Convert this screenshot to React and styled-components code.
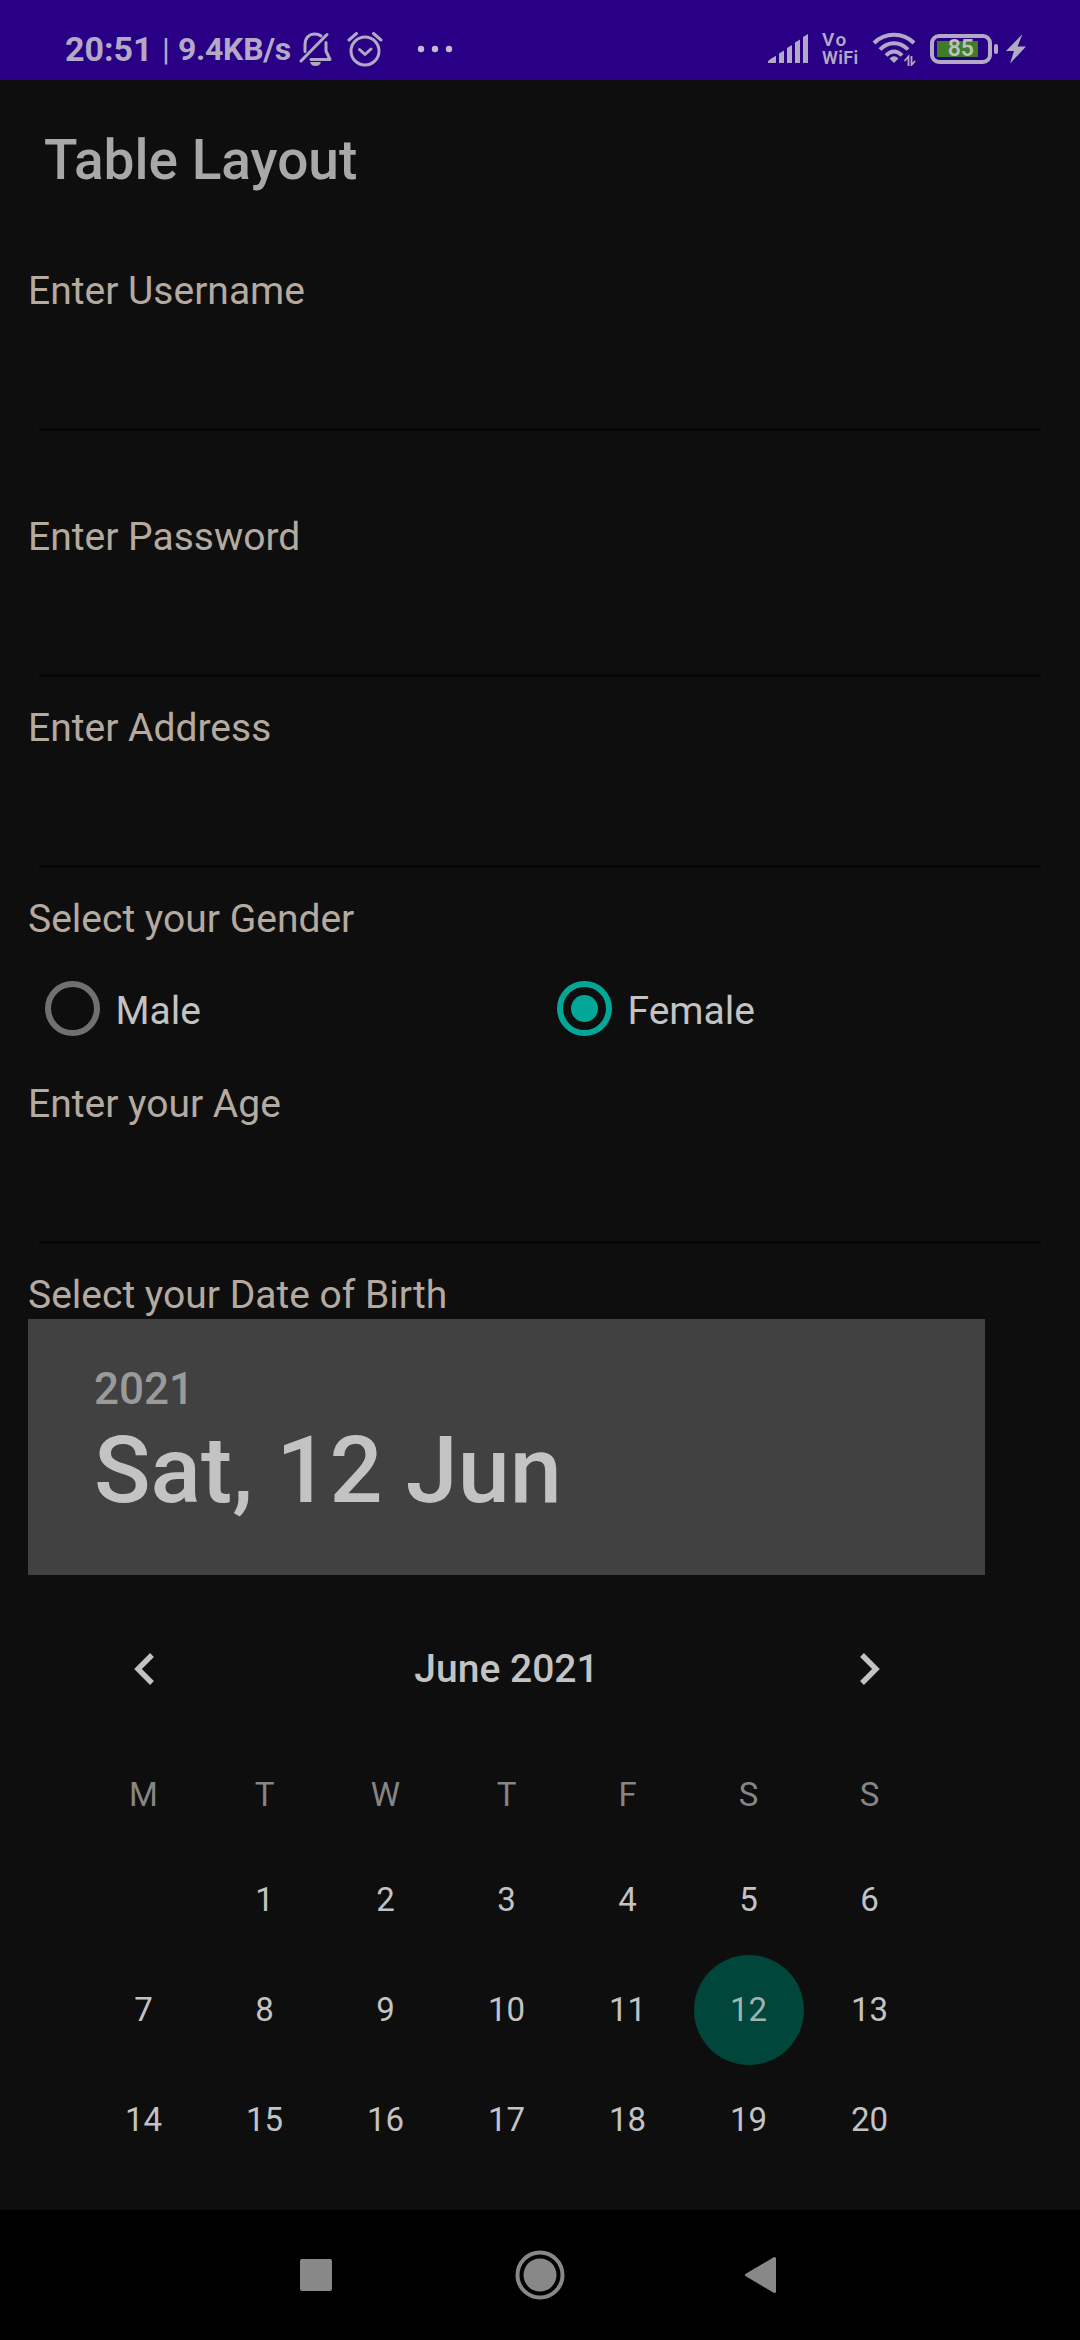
import React, { useState } from "react";
import styled, { createGlobalStyle } from "styled-components";

const GlobalStyle = createGlobalStyle`
  * { box-sizing: border-box; }
  body { margin: 0; background: #0e0e0e; }
  button { font: inherit; border: 0; padding: 0; background: none; color: inherit; }
`;

const Screen = styled.div`
  width: 1080px;
  height: 2340px;
  display: flex;
  flex-direction: column;
  overflow: hidden;
  background: #0e0e0e;
  color: #c3c3c3;
  font-family: Roboto, sans-serif;
`;

const StatusBar = styled.header`
  height: 80px;
  flex: none;
  display: flex;
  align-items: flex-start;
  justify-content: space-between;
  padding: 27px 54px 0 65px;
  background: #290085;
  color: #b2a9c4;
`;

const StatusGroup = styled.div`
  display: flex;
  align-items: center;
  height: 44px;
`;

const StatusText = styled.span`
  width: ${(p) => p.$width}px;
  font-size: ${(p) => p.$size}px;
  font-weight: ${(p) => p.$weight || 700};
  letter-spacing: ${(p) => p.$tracking || 0}px;
  line-height: 46px;
  white-space: nowrap;
`;

const StatusIcon = styled.svg`
  flex: none;
  display: block;
  margin-left: ${(p) => p.$gap || 0}px;
`;

const VoWifi = styled.div`
  width: 38px;
  margin-left: 13px;
  display: flex;
  flex-direction: column;
  font-size: 18px;
  line-height: 18px;
  font-weight: 600;
  letter-spacing: 0.4px;
`;

const Vo = styled.span`
  font-size: 19px;
  letter-spacing: 1.5px;
`;

const Battery = styled.div`
  width: 62px;
  height: 30px;
  margin-left: 14px;
  padding: 3px;
  display: flex;
  border: 4px solid currentColor;
  border-radius: 9px;
`;

const BatteryLevel = styled.div`
  width: 41px;
  height: 16px;
  display: flex;
  align-items: center;
  justify-content: flex-end;
  padding-right: 4px;
  background: #3c7d26;
  color: #bdbfc0;
  font-size: 23px;
  font-weight: 600;
  line-height: 16px;
`;

const BatteryTip = styled.span`
  width: 4px;
  height: 10px;
  margin-left: 2px;
  border-radius: 2px;
  background: currentColor;
`;

const AppBar = styled.div`
  height: 154px;
  flex: none;
  display: flex;
  align-items: center;
  padding: 6px 44px 0;
`;

const Title = styled.h1`
  margin: 0;
  color: #a8a8a8;
  font-size: 55px;
  line-height: 64px;
  font-weight: 500;
`;

const Form = styled.main`
  flex: 1;
  min-height: 0;
  overflow: hidden;
  padding: 31px 28px 0;
`;

const Field = styled.div`
  height: 191px;
  margin-bottom: ${(p) => p.$after || 0}px;
`;

const Label = styled.label`
  display: block;
  height: ${(p) => p.$height || 51}px;
  color: #b5aaa0;
  font-size: 39px;
  line-height: 52px;
  white-space: nowrap;
`;

const Input = styled.input`
  display: block;
  width: 1002px;
  height: 115px;
  margin: 0 11px;
  padding: 0;
  border: 0;
  border-bottom: 3px solid #070707;
  background: transparent;
  color: #c3c3c3;
  font: 49px Roboto, sans-serif;
  outline: none;
`;

const RadioGroup = styled.div`
  height: 134px;
  display: grid;
  grid-template-columns: 1fr 1fr;
  align-items: center;
  padding-bottom: 5px;
`;

const Radio = styled.button`
  display: flex;
  align-items: center;
  gap: 16px;
  padding-left: 16.5px;
  font-size: 39px;
  line-height: 52px;
`;

const RadioRing = styled.span`
  width: 55px;
  height: 55px;
  display: grid;
  place-items: center;
  border: 6px solid ${(p) => (p.$on ? "#03a798" : "#707070")};
  border-radius: 50%;
`;

const RadioDot = styled.span`
  width: 27px;
  height: 27px;
  border-radius: 50%;
  background: #03a798;
`;

const RadioText = styled.span`
  padding-top: 5px;
`;

const DatePicker = styled.section`
  width: 957px;
`;

const DateHeader = styled.div`
  height: 256px;
  padding: 44px 66px 0;
  background: #414141;
`;

const Year = styled.div`
  color: #9a9a9a;
  font-size: 44px;
  line-height: 52px;
  font-weight: 500;
`;

const DateText = styled.div`
  font-size: 93.5px;
  line-height: 110px;
  font-weight: 500;
`;

const MonthBar = styled.div`
  height: 154px;
  margin-top: 17px;
  padding: 0 55px;
  display: grid;
  grid-template-columns: 121px 1fr 121px;
  align-items: center;
  justify-items: center;
`;

const MonthName = styled.div`
  font-size: 39px;
  font-weight: 500;
  line-height: 46px;
`;

const ArrowButton = styled.button`
  display: flex;
`;

const WeekRow = styled.div`
  height: ${(p) => p.$height}px;
  padding: 0 55px;
  display: grid;
  grid-template-columns: repeat(7, 121px);
  align-items: center;
  justify-items: center;
`;

const WeekDay = styled.span`
  padding-bottom: 2px;
  color: #858585;
  font-size: 33px;
  line-height: 39px;
`;

const Day = styled.button`
  width: 110px;
  height: 110px;
  border-radius: 50%;
  background: ${(p) => (p.$selected ? "#00463a" : "transparent")};
  color: ${(p) => (p.$selected ? "#9fb4af" : "#c3c3c3")};
  font-size: 33px;
  line-height: 110px;
  text-align: center;
`;

const NavBar = styled.nav`
  height: 130px;
  flex: none;
  display: grid;
  grid-template-columns: repeat(3, 224px);
  justify-content: center;
  align-items: center;
  justify-items: center;
  background: #000;
`;

const NavButton = styled.button`
  display: flex;
`;

const BellOff = () => (
  <StatusIcon width="34" height="36" viewBox="0 0 34 36" fill="none" stroke="currentColor" strokeWidth="3" strokeLinecap="round" strokeLinejoin="round" $gap={7}>
    <path d="M6 20.500V14C6 7 10 3 16 3C18.500 3 20.500 3.700 22 5" />
    <path d="M27 11.500V20L31 28.500H12" />
    <path d="M2 30L28 3.500" />
    <path d="M11 31H22C21 34 19 35 16.500 35S12 34 11 31Z" fill="currentColor" stroke="none" />
  </StatusIcon>
);

const Alarm = () => (
  <StatusIcon width="36" height="36" viewBox="0 0 36 36" fill="none" stroke="currentColor" strokeWidth="3" strokeLinecap="round" strokeLinejoin="round" $gap={14}>
    <circle cx="18" cy="20" r="14" />
    <path d="M12.500 18.500L18 23.500L24 18" />
    <path d="M2 9L9.500 2.500M34 9L26.500 2.500" />
  </StatusIcon>
);

const Dots = () => (
  <StatusIcon width="36" height="8" viewBox="0 0 36 8" fill="#c3bcd0" $gap={34}>
    <circle cx="4" cy="4" r="3.200" />
    <circle cx="18" cy="4" r="3.200" />
    <circle cx="32" cy="4" r="3.200" />
  </StatusIcon>
);

const Signal = () => (
  <StatusIcon width="41" height="30" viewBox="0 0 41 30" fill="currentColor">
    <path d="M0 29V27.500C0 26.500 6 22.500 8 22V29Z" />
    <path d="M11 29V19.500L16 16.500V29Z" />
    <path d="M19 29V14L24 11V29Z" />
    <path d="M27 29V8.500L32 5.500V29Z" />
    <path d="M35 29V3L40 0V29Z" />
  </StatusIcon>
);

const Wifi = () => (
  <StatusIcon width="44" height="34" viewBox="0 0 44 34" fill="none" stroke="currentColor" strokeWidth="4" $gap={12}>
    <path d="M2 11C13 0 31 0 42 11" />
    <path d="M8 17.500C16 9 28 9 36 17.500" />
    <path d="M14 23.500C19 18 25 18 30 23.500" />
    <path d="M17.500 26.500Q22 22 26.500 26.500L22 31Z" fill="currentColor" stroke="none" />
    <path d="M36.500 34V24.500L32.500 29M39.500 24V33L43 29" strokeWidth="1.800" />
  </StatusIcon>
);

const Bolt = () => (
  <StatusIcon width="20" height="30" viewBox="0 0 20 30" fill="currentColor" $gap={8}>
    <path d="M16.500 0L0 17H8L4 29.500L20 12.500H11.500Z" />
  </StatusIcon>
);

const Arrow = ({ back }) => (
  <svg width="22" height="34" viewBox="0 0 22 34" fill="none" stroke="currentColor" strokeWidth="5.400">
    <path d={back ? "M19 3L5 17L19 31" : "M3 3L17 17L3 31"} />
  </svg>
);

const weekDays = ["M", "T", "W", "T", "F", "S", "S"];
const weeks = [
  [null, 1, 2, 3, 4, 5, 6],
  [7, 8, 9, 10, 11, 12, 13],
  [14, 15, 16, 17, 18, 19, 20],
];

function TextField({ label, type = "text", after }) {
  return (
    <Field $after={after}>
      <Label>{label}</Label>
      <Input type={type} aria-label={label} />
    </Field>
  );
}

export default function App() {
  const [gender, setGender] = useState("Female");
  const [day, setDay] = useState(12);

  return (
    <Screen>
      <GlobalStyle />
      <StatusBar>
        <StatusGroup>
          <StatusText $size={34} $width={97}>20:51</StatusText>
          <StatusText $size={32} $width={16} $weight={400}>|</StatusText>
          <StatusText $size={32} $width={114} $tracking={-0.3}>9.4KB/s</StatusText>
          <BellOff />
          <Alarm />
          <Dots />
        </StatusGroup>
        <StatusGroup>
          <Signal />
          <VoWifi>
            <Vo>Vo</Vo>
            <span>WiFi</span>
          </VoWifi>
          <Wifi />
          <Battery>
            <BatteryLevel>85</BatteryLevel>
          </Battery>
          <BatteryTip />
          <Bolt />
        </StatusGroup>
      </StatusBar>

      <AppBar>
        <Title>Table Layout</Title>
      </AppBar>

      <Form>
        <TextField label="Enter Username" after={55} />
        <TextField label="Enter Password" type="password" />
        <TextField label="Enter Address" />
        <Label>Select your Gender</Label>
        <RadioGroup>
          {["Male", "Female"].map((name) => (
            <Radio key={name} onClick={() => setGender(name)}>
              <RadioRing $on={gender === name}>{gender === name && <RadioDot />}</RadioRing>
              <RadioText>{name}</RadioText>
            </Radio>
          ))}
        </RadioGroup>
        <TextField label="Enter your Age" />
        <Label $height={50}>Select your Date of Birth</Label>
        <DatePicker>
          <DateHeader>
            <Year>2021</Year>
            <DateText>Sat, 12 Jun</DateText>
          </DateHeader>
          <MonthBar>
            <ArrowButton aria-label="Previous month"><Arrow back /></ArrowButton>
            <MonthName>June 2021</MonthName>
            <ArrowButton aria-label="Next month"><Arrow /></ArrowButton>
          </MonthBar>
          <WeekRow $height={99}>
            {weekDays.map((name, i) => <WeekDay key={i}>{name}</WeekDay>)}
          </WeekRow>
          {weeks.map((week, i) => (
            <WeekRow key={i} $height={110}>
              {week.map((d, j) =>
                d === null ? <span key={j} /> : (
                  <Day key={j} $selected={d === day} onClick={() => setDay(d)}>{d}</Day>
                )
              )}
            </WeekRow>
          ))}
        </DatePicker>
      </Form>

      <NavBar>
        <NavButton aria-label="Recent apps">
          <svg width="32" height="32" fill="#888"><rect width="32" height="32" rx="2" /></svg>
        </NavButton>
        <NavButton aria-label="Home">
          <svg width="50" height="50" viewBox="0 0 50 50" fill="#888">
            <circle cx="25" cy="25" r="22.500" fill="none" stroke="#888" strokeWidth="4" />
            <circle cx="25" cy="25" r="16.500" />
          </svg>
        </NavButton>
        <NavButton aria-label="Back">
          <svg width="40" height="38" viewBox="0 0 40 38" fill="#888" stroke="#888" strokeWidth="3" strokeLinejoin="round">
            <path d="M2.500 19L30.500 2.500V35.500Z" />
          </svg>
        </NavButton>
      </NavBar>
    </Screen>
  );
}
